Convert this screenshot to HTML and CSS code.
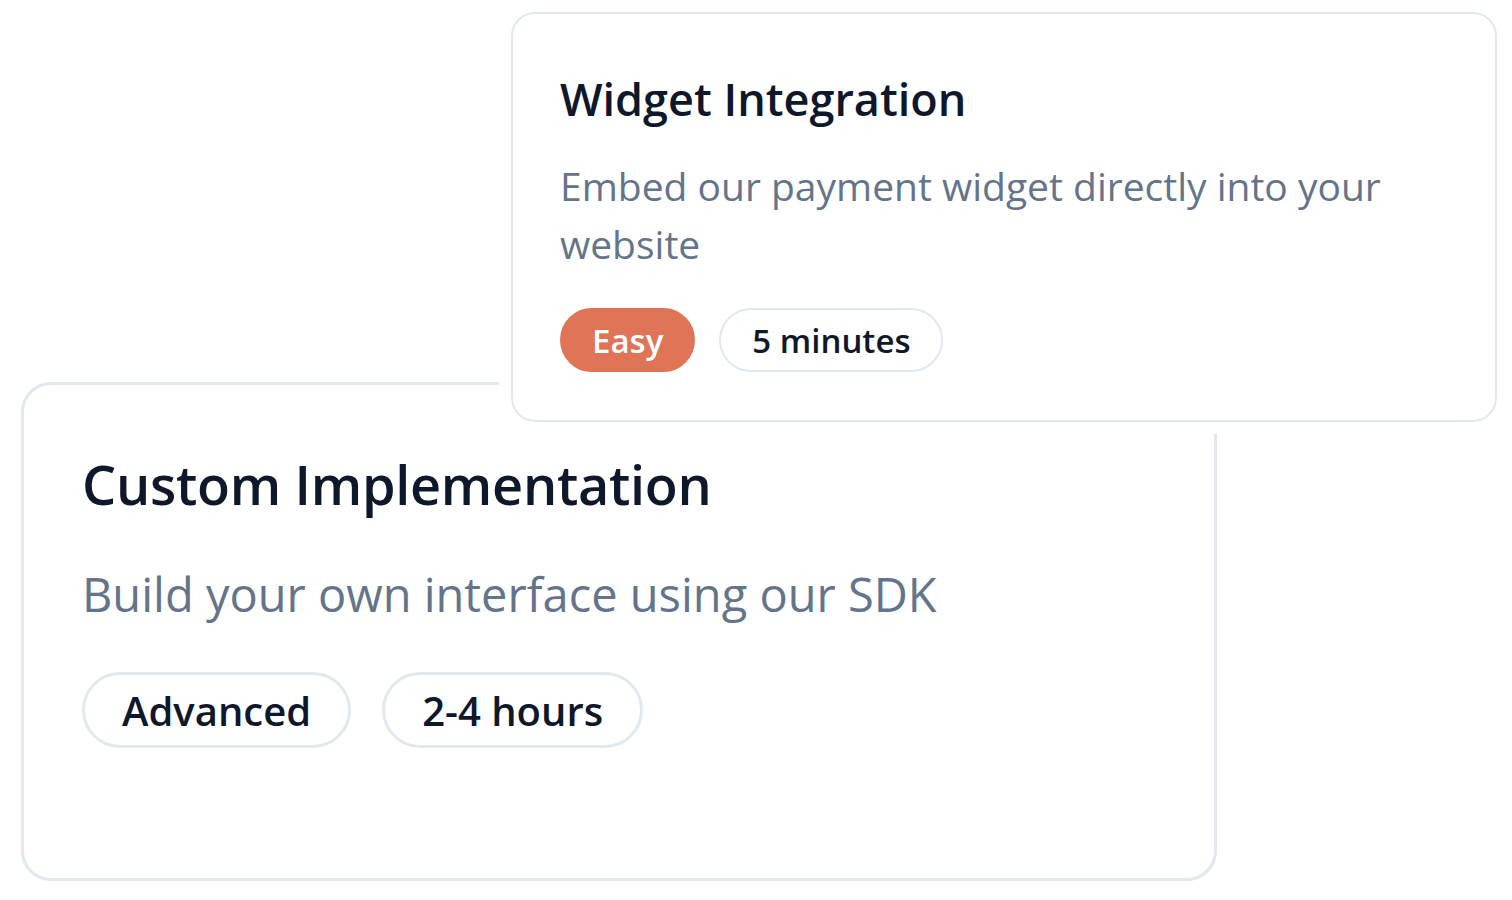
FILE: index.html
```html
<!DOCTYPE html>
<html lang="en">
<head>
<meta charset="utf-8">
<title>Integration options</title>
<link rel="stylesheet" href="styles.css">
</head>
<body>
<div class="stage">
  <article class="card card-custom">
    <h2 class="card-title">Custom Implementation</h2>
    <p class="card-desc">Build your own interface using our SDK</p>
    <div class="tags">
      <span class="tag">Advanced</span>
      <span class="tag">2-4 hours</span>
    </div>
  </article>
  <article class="card card-widget">
    <h2 class="card-title">Widget Integration</h2>
    <p class="card-desc">Embed our payment widget directly into your website</p>
    <div class="tags">
      <span class="tag tag-accent">Easy</span>
      <span class="tag">5 minutes</span>
    </div>
  </article>
</div>
</body>
</html>
```
FILE: styles.css
```css
* { box-sizing: border-box; }
html, body { margin: 0; padding: 0; background: #ffffff; }
body {
  font-family: "Open Sans", "Noto Sans", "Liberation Sans", sans-serif;
  color: #0f172a;
}
.stage {
  position: relative;
  width: 1512px;
  height: 900px;
  overflow: hidden;
  display: flex;
  flex-direction: column;
  align-items: flex-start;
}
.card {
  background: #ffffff;
  display: flex;
  flex-direction: column;
  align-items: flex-start;
}
.card-title { margin: 0; font-weight: 600; color: #0f172a; }
.card-desc { margin: 0; color: #64748b; font-weight: 400; }
.tags { display: flex; align-items: center; }
.tag {
  display: inline-flex;
  align-items: center;
  justify-content: center;
  border-radius: 999px;
  border-style: solid;
  border-color: #e2e8f0;
  color: #0f172a;
  font-weight: 600;
  background: #ffffff;
}
.tag-accent { background: #df7457; border-color: #df7457; color: #ffffff; }

/* Custom implementation card (larger, behind) */
.card-custom {
  margin: 382px 0 0 21px;
  width: 1196px;
  height: 499px;
  border: 3px solid #e2e8f0;
  border-radius: 30px;
  padding: 67px 58px 0 58px;
}
.card-custom .card-title { font-size: 54px; line-height: 64px; letter-spacing: -0.3px; }
.card-custom .card-desc { font-size: 47px; line-height: 64px; margin-top: 46px; }
.card-custom .tags { gap: 31px; margin-top: 46px; }
.card-custom .tag { height: 76px; padding: 0 37px; font-size: 40px; border-width: 3px; }

/* Widget integration card (front) */
.card-widget {
  position: absolute;
  top: 12px;
  left: 511px;
  width: 986px;
  height: 410px;
  border: 2.5px solid #e2e8f0;
  border-radius: 24px;
  padding: 58px 48px 0 47px;
  box-shadow: 0 0 0 12px #ffffff;
}
.card-widget .card-title { font-size: 45px; line-height: 54px; }
.card-widget .card-desc { font-size: 39px; line-height: 58px; margin-top: 31px; }
.card-widget .tags { gap: 24px; margin-top: 35px; }
.card-widget .tag { height: 64px; padding: 0 31px; font-size: 33px; border-width: 2.5px; }
.card-widget .tag-accent { padding: 0 30px; }
```
